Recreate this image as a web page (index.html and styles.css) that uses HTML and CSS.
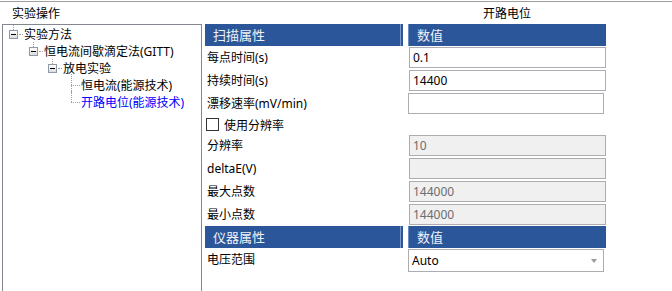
FILE: index.html
```html
<html>
	<head>
		<meta charset="utf-8">
		<link rel="stylesheet" href="styles.css">
	</head>
	<body>
		<div class="window">
			<div class="left">
				<div class="caption">实验操作</div>
				<div class="tree">
					<div class="node l0">
						<span class="twist open"><span class="exp"></span></span>
						<span class="text">实验方法</span>
					</div>
					<div class="node l1">
						<span class="twist open"><span class="exp"></span></span>
						<span class="text">恒电流间歇滴定法(GITT)</span>
					</div>
					<div class="node l2">
						<span class="twist open"><span class="exp"></span></span>
						<span class="text">放电实验</span>
					</div>
					<div class="node l3">
						<span class="twist leaf"></span>
						<span class="text">恒电流(能源技术)</span>
					</div>
					<div class="node l3">
						<span class="twist leaf last"></span>
						<span class="text selected">开路电位(能源技术)</span>
					</div>
				</div>
			</div>

			<div class="right">
				<div class="title">开路电位</div>
				<div class="grid">
					<div class="head name">扫描属性</div>
					<div class="head value">数值</div>

					<div class="label">每点时间(s)</div>
					<div class="cell"><input class="field" type="text" value="0.1"></div>

					<div class="label">持续时间(s)</div>
					<div class="cell"><input class="field" type="text" value="14400"></div>

					<div class="label">漂移速率(mV/min)</div>
					<div class="cell"><input class="field narrow" type="text" value=""></div>

					<div class="check"><span class="box"></span>使用分辨率</div>

					<div class="label">分辨率</div>
					<div class="cell"><input class="field" type="text" value="10" disabled></div>

					<div class="label">deltaE(V)</div>
					<div class="cell"><input class="field" type="text" value="" disabled></div>

					<div class="label">最大点数</div>
					<div class="cell"><input class="field" type="text" value="144000" disabled></div>

					<div class="label">最小点数</div>
					<div class="cell"><input class="field" type="text" value="144000" disabled></div>

					<div class="head name">仪器属性</div>
					<div class="head value">数值</div>

					<div class="label tall">电压范围</div>
					<div class="cell tall">
						<div class="select"><span>Auto</span><span class="arrow"></span></div>
					</div>
				</div>
			</div>
		</div>
	</body>
</html>
```

FILE: styles.css
```css
body {
	margin: 0;
	font-family: "Noto Sans", "Noto Sans CJK SC", sans-serif;
	font-size: 12px;
	color: #000;
	background: #fff;
	overflow: hidden;
}

.window {
	display: flex;
	height: 289px;
	margin-top: 1px;
	border-top: 1px solid #a0a0a0;
}

/* left: tree of experiment methods */
.left {
	width: 202px;
	flex: none;
	display: flex;
	flex-direction: column;
}

.caption {
	height: 22px;
	box-sizing: border-box;
	padding: 3px 0 0 12px;
	line-height: 17px;
}

.tree {
	flex: 1;
	margin-left: 2px;
	border: 1px solid #828790;
	border-bottom: none;
}

.node {
	display: flex;
	align-items: center;
	height: 17px;
	white-space: nowrap;
}
.l0 { padding-left: 6px; }
.l1 { padding-left: 26px; }
.l2 { padding-left: 45px; }
.l3 { padding-left: 64px; }

.twist {
	position: relative;
	flex: none;
	width: 15px;
	height: 17px;
}
.twist::before, .twist::after {
	content: "";
	position: absolute;
}
.twist.open::before {
	left: 4px;
	top: 0;
	height: 5px;
	border-left: 1px dotted #a0a0a0;
}
.twist.open::after {
	left: 10px;
	top: 9px;
	width: 4px;
	border-top: 1px dotted #a0a0a0;
}
.twist.leaf { width: 14px; }
.twist.leaf::before {
	left: 4px;
	top: -2px;
	height: 19px;
	border-left: 1px dotted #a0a0a0;
}
.twist.leaf.last::before { height: 11px; }
.twist.leaf::after {
	left: 4px;
	top: 9px;
	width: 9px;
	border-top: 1px dotted #a0a0a0;
}

.exp {
	position: absolute;
	left: 0;
	top: 5px;
	width: 9px;
	height: 9px;
	box-sizing: border-box;
	border: 1px solid #8f9aa8;
	background: linear-gradient(#ffffff, #dcdcdc);
}
.exp::after {
	content: "";
	position: absolute;
	left: 1px;
	top: 3px;
	width: 5px;
	height: 1px;
	background: #000;
}

.selected { color: #0000ff; }

/* right: property grid */
.right {
	flex: 1;
	padding-left: 3px;
}

.title {
	height: 22px;
	box-sizing: border-box;
	padding: 3px 0 0 278px;
	line-height: 17px;
}

.grid {
	display: grid;
	grid-template-columns: 198px 198px;
	column-gap: 5px;
}

.head {
	height: 22px;
	line-height: 22px;
	box-sizing: border-box;
	background: #2b579a;
	color: #eef2f8;
	font-size: 13px;
}
.head.name {
	padding-left: 8px;
	box-shadow: inset -2px 0 0 #2b579a, inset -3px 0 0 #7d98c6;
}
.head.value {
	padding-left: 9px;
	box-shadow: inset 1px 0 0 #6d8cc0;
}

.label {
	height: 23px;
	line-height: 23px;
	padding-left: 2px;
	white-space: nowrap;
}

.cell {
	height: 23px;
	display: flex;
	align-items: center;
}

.tall { height: 24px; }

.field {
	width: 197px;
	height: 21px;
	margin: 0 0 0 1px;
	box-sizing: border-box;
	border: 1px solid #abadb3;
	padding: 0 3px;
	font: inherit;
	color: #000;
	background: #fff;
	outline: none;
}
.field.narrow {
	width: 196px;
	margin-left: 0;
}
.field:disabled {
	background: #f0f0f0;
	color: #6d6d6d;
	border-color: #adadad;
}

.check {
	grid-column: 1 / 3;
	height: 19px;
	display: flex;
	align-items: center;
}
.box {
	width: 13px;
	height: 13px;
	box-sizing: border-box;
	margin: 0 5px 0 1px;
	border: 1px solid #333;
	background: #fff;
}

.select {
	width: 196px;
	height: 23px;
	margin-top: 1px;
	box-sizing: border-box;
	border: 1px solid #abadb3;
	padding: 0 6px 0 3px;
	display: flex;
	align-items: center;
	justify-content: space-between;
}
.arrow {
	width: 0;
	height: 0;
	border-left: 3px solid transparent;
	border-right: 3px solid transparent;
	border-top: 4px solid #9a9a9a;
}
```
